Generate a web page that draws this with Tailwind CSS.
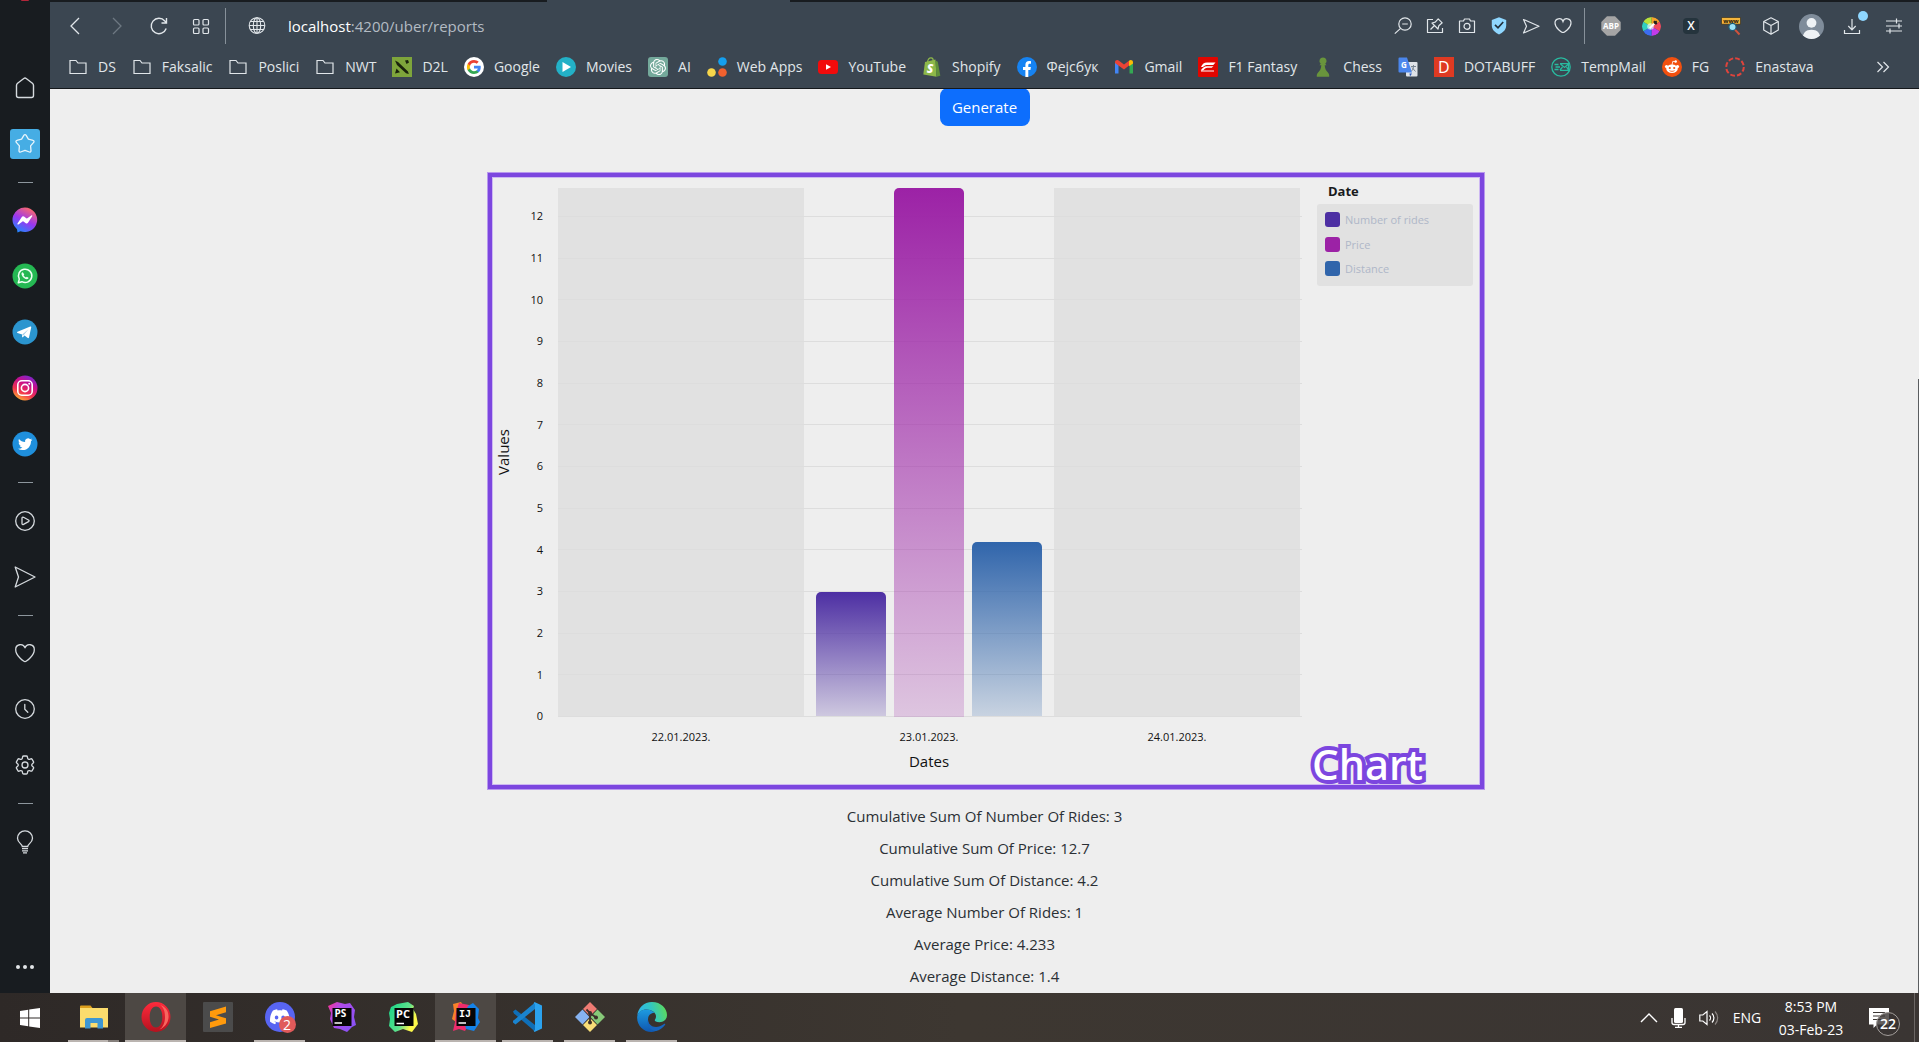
<!DOCTYPE html>
<html lang="en">
<head>
<meta charset="utf-8">
<meta name="viewport" content="width=device-width, initial-scale=1">
<title>Reports</title>
<script src="https://cdn.jsdelivr.net/npm/@tailwindcss/browser@4"></script>
</head>
<body class="min-h-screen flex flex-col bg-[#eeeeee] font-['Open_Sans','Noto_Sans',sans-serif] text-[15px] text-[#212529]">

<div class="flex-1 flex">

  <!-- Browser sidebar -->
  <aside class="w-[50px] shrink-0 bg-[#181c20] text-[#d5dade] flex flex-col items-stretch">
    <div class="h-[60px] overflow-hidden flex justify-center items-start">
      <span class="w-2 h-px rounded-b-full bg-[#b3263a]"></span>
    </div>
    <button class="h-14 grid place-items-center" aria-label="Home"><svg class="size-6" viewBox="0 0 24 24" fill="none" stroke="currentColor" stroke-width="1.400" stroke-linejoin="round"><path d="M3.500 9.500c0-1 .4-1.700 1.100-2.300L10.800 2.500a2 2 0 0 1 2.400 0l6.200 4.700c.7.6 1.100 1.300 1.100 2.300V19.500a2 2 0 0 1-2 2h-13a2 2 0 0 1-2-2Z"/></svg></button>
    <button class="h-14 grid place-items-center" aria-label="Speed Dial"><span class="size-[30px] rounded-[3px] bg-[#46ade4] grid place-items-center"><svg class="size-6" viewBox="0 0 24 24" fill="none" stroke="#e8f5fc" stroke-width="1.300" stroke-linejoin="round"><path d="M11 3.200a1.200 1.200 0 0 1 2 0l2.400 4 4.700 1.200a1.200 1.200 0 0 1 .6 2l-3.100 3.500.4 5a1.200 1.200 0 0 1-1.600 1.100L12 18.300l-4.400 1.700A1.200 1.200 0 0 1 6 18.900l.4-5-3.100-3.500a1.200 1.200 0 0 1 .6-2l4.700-1.200Z"/></svg></span></button>
    <div class="h-5 grid place-items-center"><span class="w-[15px] h-px bg-[#8d969d]"></span></div>
    <button class="h-14 grid place-items-center" aria-label="Messenger"><svg class="size-[26px]" viewBox="0 0 26 26"><defs><linearGradient id="msg" x1="0.200" y1="1" x2="0.700" y2="0"><stop offset="0" stop-color="#1a8cff"/><stop offset=".5" stop-color="#9a36f0"/><stop offset="1" stop-color="#ff6a68"/></linearGradient></defs><path d="M13 .5a12.300 12.300 0 1 1-4.500 23.800L5.500 25.500 5 22.300A12.300 12.300 0 0 1 13 .5Z" fill="url(#msg)"/><path d="M5.500 16.500 9.800 10a1.600 1.600 0 0 1 2.200-.4l2.300 1.700a1 1 0 0 0 1 0l4-2.800c.6-.4 1.300.2.9.8l-4.200 6.500a1.600 1.600 0 0 1-2.200.4l-2.300-1.700a1 1 0 0 0-1 0l-4.100 2.900c-.6.4-1.300-.3-.9-.9Z" fill="#fff"/></svg></button>
    <button class="h-14 grid place-items-center" aria-label="WhatsApp"><svg class="size-[26px]" viewBox="0 0 26 26"><circle cx="13" cy="13" r="12.500" fill="#25b853"/><path d="m6.300 19.700 1-3.600a6.700 6.700 0 1 1 2.600 2.600Z" fill="none" stroke="#eefff3" stroke-width="1.500" stroke-linejoin="round"/><path d="M10.800 9.300c-.6-.1-1.400.7-1.300 1.700.3 2.400 3 5 5.300 5.200 1 0 1.900-.8 1.700-1.500l-1.700-1-.9.8c-1-.4-1.900-1.300-2.300-2.200l.7-.9Z" fill="#eefff3"/></svg></button>
    <button class="h-14 grid place-items-center" aria-label="Telegram"><svg class="size-[26px]" viewBox="0 0 26 26"><circle cx="13" cy="13" r="12.500" fill="#2b95cf"/><path d="m5.500 12.800 12.800-5.200c.6-.2 1.100.1.900 1l-2.200 9.900c-.2.700-.7.900-1.200.6l-3.300-2.500-1.700 1.600c-.4.300-.7.200-.7-.3l.1-2.400-4.700-1.600c-.7-.3-.7-.8 0-1.100Z" fill="#fff"/><path d="m10.200 15.500 6.300-5.300-5.100 6.300Z" fill="#a6cfe6"/></svg></button>
    <button class="h-14 grid place-items-center" aria-label="Instagram"><svg class="size-[26px]" viewBox="0 0 26 26"><defs><linearGradient id="ig" x1=".2" y1="1" x2=".7" y2="0"><stop offset="0" stop-color="#fdc02f"/><stop offset=".35" stop-color="#f1324f"/><stop offset=".7" stop-color="#c40f8e"/><stop offset="1" stop-color="#7a28d0"/></linearGradient></defs><circle cx="13" cy="13" r="12.500" fill="url(#ig)"/><g fill="none" stroke="#fff" stroke-width="1.600"><rect x="5.800" y="5.800" width="14.400" height="14.400" rx="4"/><circle cx="13" cy="13" r="3.600"/></g><circle cx="17.200" cy="8.800" r="1" fill="#fff"/></svg></button>
    <button class="h-14 grid place-items-center" aria-label="Twitter"><svg class="size-[26px]" viewBox="0 0 26 26"><circle cx="13" cy="13" r="12.500" fill="#1f8fdc"/><path transform="translate(6 6) scale(.6)" fill="#fff" d="M23.953 4.570a10 10 0 01-2.825.775 4.958 4.958 0 002.163-2.723c-.951.555-2.005.959-3.127 1.184a4.920 4.920 0 00-8.384 4.482C7.690 8.095 4.067 6.130 1.640 3.162a4.822 4.822 0 00-.666 2.475c0 1.710.870 3.213 2.188 4.096a4.904 4.904 0 01-2.228-.616v.060a4.923 4.923 0 003.946 4.827 4.996 4.996 0 01-2.212.085 4.936 4.936 0 004.604 3.417 9.867 9.867 0 01-6.102 2.105c-.390 0-.779-.023-1.170-.067a13.995 13.995 0 007.557 2.209c9.053 0 13.998-7.496 13.998-13.985 0-.210 0-.420-.015-.630A9.935 9.935 0 0024 4.590z"/></svg></button>
    <div class="h-[21px] grid place-items-center"><span class="w-[15px] h-px bg-[#8d969d]"></span></div>
    <button class="h-14 grid place-items-center" aria-label="Player"><svg class="size-6" viewBox="0 0 24 24" fill="none" stroke="currentColor" stroke-width="1.300" stroke-linejoin="round"><circle cx="12" cy="12" r="9.300"/><path d="M9 9.200c0-1 .7-1.300 1.500-.9l5 2.700c.8.500.8 1.100 0 1.600l-5 2.800c-.8.400-1.500.1-1.500-.8Z"/></svg></button>
    <button class="h-14 grid place-items-center" aria-label="My Flow"><svg class="size-6" viewBox="0 0 24 24" fill="none" stroke="currentColor" stroke-width="1.300" stroke-linejoin="round"><path d="M2.200 2 22 12 2.200 22 5.500 12Z"/></svg></button>
    <div class="h-5 grid place-items-center"><span class="w-[15px] h-px bg-[#8d969d]"></span></div>
    <button class="h-14 grid place-items-center" aria-label="Bookmarks"><svg class="size-6" viewBox="0 0 24 24" fill="none" stroke="currentColor" stroke-width="1.300" stroke-linejoin="round"><path d="M12 20.700c-1 0-9.300-5.700-9.300-12A4.800 4.800 0 0 1 12 6.800a4.800 4.800 0 0 1 9.300 1.900c0 6.300-8.300 12-9.300 12Z"/></svg></button>
    <button class="h-14 grid place-items-center" aria-label="History"><svg class="size-6" viewBox="0 0 24 24" fill="none" stroke="currentColor" stroke-width="1.300" stroke-linecap="round"><circle cx="12" cy="12" r="9.300"/><path d="M11.800 7.500v4.800l3 3"/></svg></button>
    <button class="h-14 grid place-items-center" aria-label="Settings"><svg class="size-6" viewBox="0 0 24 24" fill="none" stroke="currentColor" stroke-width="1.300" stroke-linejoin="round"><path d="M9.594 3.940c.090-.542.560-.940 1.110-.940h2.593c.550 0 1.020.398 1.110.940l.213 1.281c.063.374.313.686.645.870.074.040.147.083.220.127.325.196.720.257 1.075.124l1.217-.456a1.125 1.125 0 0 1 1.370.490l1.296 2.247a1.125 1.125 0 0 1-.260 1.431l-1.003.827c-.293.241-.438.613-.430.992a7.723 7.723 0 0 1 0 .255c-.008.378.137.750.430.991l1.004.827c.424.350.534.955.260 1.430l-1.298 2.247a1.125 1.125 0 0 1-1.369.491l-1.217-.456c-.355-.133-.750-.072-1.076.124a6.470 6.470 0 0 1-.220.128c-.331.183-.581.495-.644.869l-.213 1.281c-.090.543-.560.940-1.110.940h-2.594c-.550 0-1.019-.398-1.110-.940l-.213-1.281c-.062-.374-.312-.686-.644-.870a6.520 6.520 0 0 1-.220-.127c-.325-.196-.720-.257-1.076-.124l-1.217.456a1.125 1.125 0 0 1-1.369-.490l-1.297-2.247a1.125 1.125 0 0 1 .260-1.431l1.004-.827c.292-.240.437-.613.430-.991a6.932 6.932 0 0 1 0-.255c.007-.380-.138-.751-.430-.992l-1.004-.827a1.125 1.125 0 0 1-.260-1.430l1.297-2.247a1.125 1.125 0 0 1 1.370-.491l1.216.456c.356.133.751.072 1.076-.124.072-.044.146-.086.220-.128.332-.183.582-.495.644-.869l.214-1.280Z"/><circle cx="12" cy="12" r="3"/></svg></button>
    <div class="h-[21px] grid place-items-center"><span class="w-[15px] h-px bg-[#8d969d]"></span></div>
    <button class="h-14 grid place-items-center" aria-label="Tips"><svg class="size-6" viewBox="0 0 24 24" fill="none" stroke="currentColor" stroke-width="1.300"><path d="M9.300 16.500c0-2.500-4.800-3.700-4.800-8.200a7.500 7.500 0 0 1 15 0c0 4.500-4.800 5.700-4.800 8.200ZM9 18.700h6M9 20.800h6M10 22.900h4"/></svg></button>
    <button class="mt-auto h-[52px] flex justify-center items-center gap-[3px]" aria-label="More"><span class="size-1 rounded-full bg-[#e2e5e8]"></span><span class="size-1 rounded-full bg-[#e2e5e8]"></span><span class="size-1 rounded-full bg-[#e2e5e8]"></span></button>
  </aside>

  <div class="flex-1 min-w-0 flex flex-col">

    <!-- Tab strip edge with the active tab -->
    <div class="h-0.5 bg-[#181c20] flex"><span class="ml-[497px] w-[243px] bg-[#3b4651]"></span></div>

    <header class="bg-[#3b4651] border-b border-[#14181b] text-[#e1e6ea]">
      <!-- Address bar -->
      <div class="h-12 flex items-center pl-1 pr-[5px]">
        <button class="w-[42px] grid place-items-center" aria-label="Back"><svg class="size-5" viewBox="0 0 20 20" fill="none" stroke="currentColor" stroke-width="1.300"><path d="M14 2 6 10l8 8"/></svg></button>
        <button class="w-[42px] grid place-items-center text-[#6d7882]" aria-label="Forward"><svg class="size-5" viewBox="0 0 20 20" fill="none" stroke="currentColor" stroke-width="1.300"><path d="m6 2 8 8-8 8"/></svg></button>
        <button class="w-[42px] grid place-items-center" aria-label="Reload"><svg class="size-5" viewBox="0 0 20 20" fill="none" stroke="currentColor" stroke-width="1.400"><path d="M17.200 12.500A7.700 7.700 0 1 1 15.800 5l1.500 1.500M17.500 2v5h-5"/></svg></button>
        <button class="w-[42px] grid place-items-center" aria-label="Tab overview"><svg class="size-5" viewBox="0 0 20 20" fill="none" stroke="currentColor" stroke-width="1.200"><rect x="2.500" y="3.500" width="5.500" height="5.500" rx="1"/><rect x="12" y="3.500" width="5.500" height="5.500" rx="1"/><rect x="2.500" y="12" width="5.500" height="5.500" rx="1"/><rect x="12" y="12" width="5.500" height="5.500" rx="1"/></svg></button>
        <span class="ml-[3px] w-px h-9 bg-[#87919a]"></span>
        <button class="ml-2 w-[46px] grid place-items-center" aria-label="Site information"><svg class="size-5" viewBox="0 0 20 20" fill="none" stroke="currentColor" stroke-width="1.100"><circle cx="10" cy="9.500" r="7.800"/><ellipse cx="10" cy="9.500" rx="3.700" ry="7.800"/><path d="M10 1.700v15.600M2.200 9.500h15.600M3.300 5.500h13.400M3.300 13.500h13.400"/></svg></button>
        <label class="ml-2 flex-1 min-w-0 flex items-center"><span class="text-white">localhost</span><input class="flex-1 min-w-0 bg-transparent text-[#b3bbc3] outline-none" type="text" aria-label="Address" value=":4200/uber/reports"></label>

        <button class="w-8 grid place-items-center" aria-label="Zoom"><svg class="size-5" viewBox="0 0 20 20" fill="none" stroke="currentColor" stroke-width="1.200"><circle cx="12" cy="8" r="6.200"/><path d="m7.600 12.400-5.800 5.200M9.200 8h5.600"/></svg></button>
        <button class="w-8 grid place-items-center" aria-label="Pin board"><svg class="size-5" viewBox="0 0 20 20" fill="none" stroke="currentColor" stroke-width="1.200" stroke-linejoin="round"><path d="M8 3.500H2.500v13h15V12M5.500 13.500l4-4M7 7l6 6 .8-3.200 3.400-3L13.200 2.800l-3 3.400Z"/></svg></button>
        <button class="w-8 grid place-items-center" aria-label="Snapshot"><svg class="size-5" viewBox="0 0 20 20" fill="none" stroke="currentColor" stroke-width="1.200" stroke-linejoin="round"><path d="M2.500 5h4l1-2h5l1 2h4v11.500h-15Z"/><circle cx="10" cy="10.300" r="3"/></svg></button>
        <button class="w-8 grid place-items-center" aria-label="Ad blocker"><svg class="size-5" viewBox="0 0 20 20"><path d="M10 1.200 17.200 4v5.500c0 4.500-3.700 7.300-7.200 9-3.500-1.700-7.200-4.500-7.200-9V4Z" fill="#8fd7ff"/><path d="m6 8.800 3 3L14.200 6" fill="none" stroke="#22313d" stroke-width="1.700"/></svg></button>
        <button class="w-8 grid place-items-center" aria-label="Send to My Flow"><svg class="size-5" viewBox="0 0 20 20" fill="none" stroke="currentColor" stroke-width="1.200" stroke-linejoin="round"><path d="M2.500 3.500 18 10.300 2.500 17 5.500 10.300Z"/></svg></button>
        <button class="w-8 grid place-items-center" aria-label="Add to bookmarks"><svg class="size-5" viewBox="0 0 20 20" fill="none" stroke="currentColor" stroke-width="1.200"><path d="M10 16.500c-1 0-8-4.300-8-9.500a4.100 4.100 0 0 1 8-1.400A4.100 4.100 0 0 1 18 7c0 5.200-7 9.500-8 9.500Z"/></svg></button>
        <span class="ml-[5px] mr-1.5 w-px h-9 bg-[#87919a]"></span>
        <button class="w-10 grid place-items-center" aria-label="Adblock Plus"><svg class="size-5" viewBox="0 0 20 20"><path d="M6 .3h8L19.700 6v8L14 19.700H6L.3 14V6Z" fill="#a5a5a5"/><text x="10" y="13.300" text-anchor="middle" font-size="8" font-weight="700" fill="#fff">ABP</text></svg></button>
        <button class="w-10 grid place-items-center" aria-label="Color picker"><span class="size-[19px] rounded-full overflow-hidden grid"><svg class="size-[19px]" viewBox="0 0 20 20"><path d="M10 10 10 0A10 10 0 0 1 18.700 5Z" fill="#f6a32a"/><path d="M10 10 18.700 5A10 10 0 0 1 18.700 15Z" fill="#f04a5e"/><path d="M10 10 18.700 15A10 10 0 0 1 10 20Z" fill="#c33bea"/><path d="M10 10V20A10 10 0 0 1 1.300 15Z" fill="#3c6df0"/><path d="M10 10 1.300 15A10 10 0 0 1 1.300 5Z" fill="#30cfc0"/><path d="M10 10 1.300 5A10 10 0 0 1 10 0Z" fill="#b8e23b"/><circle cx="9" cy="10" r="3.500" fill="#fff" opacity=".6"/><path d="m8 12 5-5" stroke="#fff" stroke-width="2"/><path d="m12.500 4.500 3 3M13 7l2.500-2.500" stroke="#222" stroke-width="2"/></svg></span></button>
        <button class="w-10 grid place-items-center" aria-label="X extension"><span class="size-4 rounded-sm bg-[#25343d] grid place-items-center text-xs leading-none font-semibold text-white">X</span></button>
        <button class="w-10 grid place-items-center" aria-label="WWW extension"><svg class="size-5 overflow-visible" viewBox="0 0 20 20"><path d="M.5 1.500h19v6.700H.5Z" fill="#f4b53c" stroke="#2b2618" stroke-width=".6"/><text x="10" y="6.500" text-anchor="middle" font-size="6" font-weight="700" fill="#1c1609">www</text><circle cx="11.500" cy="11" r="3.600" fill="#9be2f4" stroke="#1e5c77" stroke-width="1.200"/><path d="m14.200 13.900 4.300 4.600" stroke="#d0533c" stroke-width="2"/></svg></button>
        <button class="w-10 grid place-items-center" aria-label="Extensions"><svg class="size-5" viewBox="0 0 20 20" fill="none" stroke="currentColor" stroke-width="1.200" stroke-linejoin="round"><path d="M10 1.800 17.300 5.500v8.600L10 18.200 2.700 14.100V5.500ZM2.700 5.500 10 9.500l7.300-4M10 9.500v8.700"/></svg></button>
        <button class="w-10 grid place-items-center" aria-label="Profile"><svg class="size-[25px]" viewBox="0 0 24 24"><defs><clipPath id="av"><circle cx="12" cy="12" r="12"/></clipPath></defs><g clip-path="url(#av)"><path d="M0 0h24v24H0Z" fill="#7f8c9a"/><circle cx="12" cy="8.500" r="4.700" fill="#eef2f5"/><path d="M3.500 24c0-6 3-9 8.500-9s8.500 3 8.500 9Z" fill="#eef2f5"/></g></svg></button>
        <button class="relative w-10 grid place-items-center" aria-label="Downloads"><svg class="size-5" viewBox="0 0 20 20" fill="none" stroke="currentColor" stroke-width="1.200"><path d="M11 3v10.500M7.300 10l3.700 3.800 3.700-3.800M3.500 14v3.500h15V14"/></svg><span class="absolute right-[3px] -top-[5px] size-2.5 rounded-full bg-[#8fd7ff]"></span></button>
        <button class="ml-[3px] w-10 grid place-items-center" aria-label="Easy setup"><svg class="size-5" viewBox="0 0 20 20" fill="none" stroke="currentColor" stroke-width="1.200"><path d="M2 5h16M2 10h16M2 15h16M12.500 2.500v5M15 7.500v5M6 12.500v5"/></svg></button>
      </div>

      <!-- Bookmarks bar -->
      <nav class="h-[38px] pb-1 pl-[18px] pr-[26px] flex items-center gap-4 text-sm whitespace-nowrap" aria-label="Bookmarks">
        <a href="#" class="flex items-center gap-2.5"><svg class="size-5" viewBox="0 0 20 20" fill="none" stroke="currentColor" stroke-width="1.200"><path d="M2 16.500v-13h6l2 2.500h8v10.500Z"/></svg>DS</a>
        <a href="#" class="flex items-center gap-2.5"><svg class="size-5" viewBox="0 0 20 20" fill="none" stroke="currentColor" stroke-width="1.200"><path d="M2 16.500v-13h6l2 2.500h8v10.500Z"/></svg>Faksalic</a>
        <a href="#" class="flex items-center gap-2.5"><svg class="size-5" viewBox="0 0 20 20" fill="none" stroke="currentColor" stroke-width="1.200"><path d="M2 16.500v-13h6l2 2.500h8v10.500Z"/></svg>Poslici</a>
        <a href="#" class="flex items-center gap-2.5"><svg class="size-5" viewBox="0 0 20 20" fill="none" stroke="currentColor" stroke-width="1.200"><path d="M2 16.500v-13h6l2 2.500h8v10.500Z"/></svg>NWT</a>
        <a href="#" class="flex items-center gap-2.5"><svg class="size-5" viewBox="0 0 20 20"><path d="M0 0h20v20H0Z" fill="#7ea53b"/><path d="M3 3.500 6 5l10 9.500.8 2.500-2.800-.7L5 8ZM13 3.500l3-.5 1 2.500-2.500 1.500ZM3 16.500l1.500-5 3.500 3.800Z" fill="#1a230c"/></svg>D2L</a>
        <a href="#" class="flex items-center gap-2.5"><svg class="size-5" viewBox="0 0 20 20"><circle cx="10" cy="10" r="10" fill="#fff"/><g transform="translate(2.300 2.300) scale(.64)"><path fill="#4285f4" d="M22.560 12.250c0-.780-.070-1.530-.200-2.250H12v4.260h5.920c-.260 1.370-1.040 2.530-2.210 3.310v2.770h3.570c2.080-1.920 3.280-4.740 3.280-8.090Z"/><path fill="#34a853" d="M12 23c2.970 0 5.460-.980 7.280-2.660l-3.570-2.770c-.980.660-2.230 1.060-3.710 1.060-2.860 0-5.290-1.930-6.160-4.530H2.180v2.840C3.990 20.530 7.700 23 12 23Z"/><path fill="#fbbc05" d="M5.840 14.090c-.220-.660-.350-1.360-.350-2.090s.130-1.430.350-2.090V7.070H2.180C1.430 8.550 1 10.220 1 12s.430 3.450 1.180 4.930l3.660-2.840Z"/><path fill="#ea4335" d="M12 5.380c1.620 0 3.060.560 4.210 1.640l3.150-3.150C17.450 2.090 14.970 1 12 1 7.700 1 3.990 3.470 2.180 7.070l3.660 2.840c.870-2.600 3.300-4.530 6.160-4.530Z"/></g></svg>Google</a>
        <a href="#" class="flex items-center gap-2.5"><svg class="size-5" viewBox="0 0 20 20"><circle cx="10" cy="10" r="10" fill="#23b1c7"/><path d="m6.500 5 8.500 5-8.500 5Z" fill="#fff"/></svg>Movies</a>
        <a href="#" class="flex items-center gap-2.5"><svg class="size-5" viewBox="0 0 20 20"><rect width="20" height="20" rx="3" fill="#74a99b"/><path transform="translate(2 2) scale(.667)" fill="#fff" d="M22.282 9.821a5.985 5.985 0 0 0-.516-4.911 6.046 6.046 0 0 0-6.510-2.900A6.065 6.065 0 0 0 4.981 4.182a5.985 5.985 0 0 0-3.998 2.900 6.046 6.046 0 0 0 .743 7.097 5.980 5.980 0 0 0 .511 4.911 6.051 6.051 0 0 0 6.515 2.900A5.985 5.985 0 0 0 13.260 24a6.056 6.056 0 0 0 5.772-4.206 5.989 5.989 0 0 0 3.998-2.900 6.056 6.056 0 0 0-.748-7.073zm-9.022 12.608a4.476 4.476 0 0 1-2.876-1.041l.142-.080 4.778-2.758a.795.795 0 0 0 .393-.681v-6.737l2.020 1.169a.071.071 0 0 1 .038.052v5.583a4.504 4.504 0 0 1-4.495 4.494zm-9.661-4.125a4.471 4.471 0 0 1-.535-3.014l.142.085 4.783 2.758a.771.771 0 0 0 .781 0l5.843-3.369v2.332a.080.080 0 0 1-.033.062L9.740 19.950a4.499 4.499 0 0 1-6.141-1.646zM2.341 7.896a4.485 4.485 0 0 1 2.366-1.973V11.600a.766.766 0 0 0 .388.677l5.814 3.354-2.020 1.169a.076.076 0 0 1-.071 0l-4.830-2.787A4.504 4.504 0 0 1 2.341 7.872zm16.596 3.856L13.104 8.364 15.119 7.200a.076.076 0 0 1 .071 0l4.830 2.791a4.494 4.494 0 0 1-.677 8.104v-5.677a.790.790 0 0 0-.407-.667zm2.011-3.023l-.142-.085-4.774-2.782a.776.776 0 0 0-.785 0L9.409 9.230V6.897a.066.066 0 0 1 .028-.062l4.830-2.787a4.499 4.499 0 0 1 6.680 4.660zM8.307 12.863l-2.020-1.164a.080.080 0 0 1-.038-.057V6.074a4.499 4.499 0 0 1 7.376-3.454l-.142.081L8.704 5.459a.795.795 0 0 0-.393.681zm1.098-2.365l2.602-1.500 2.607 1.500v2.999l-2.597 1.500-2.607-1.500Z"/></svg>AI</a>
        <a href="#" class="flex items-center gap-2.5"><svg class="size-5" viewBox="0 0 20 20"><circle cx="15.500" cy="4.500" r="4.300" fill="#149fee"/><circle cx="4.500" cy="15.500" r="4.300" fill="#f7d64a"/><circle cx="15.500" cy="15.500" r="4.300" fill="#f1612e"/></svg>Web Apps</a>
        <a href="#" class="flex items-center gap-2.5"><svg class="size-5" viewBox="0 0 20 20"><rect y="3" width="20" height="14" rx="3.500" fill="#f20b0b"/><path d="m8 7.200 5 2.800-5 2.800Z" fill="#fff"/></svg>YouTube</a>
        <a href="#" class="flex items-center gap-2.5"><svg class="size-5" viewBox="0 0 20 20"><path d="M3 5 13.500 2.500 14.500 19.800 1.300 17.500Z" fill="#8db849"/><path d="m13.500 3.500 2.300 1.200 2.500 14-3.800 1.100Z" fill="#5f8f3a"/><path d="M5.500 5C6 1.500 8 .7 9.300.8c1.700.2 2 2 2 3.200" fill="none" stroke="#8db849" stroke-width="1.200"/><text x="8" y="15.500" text-anchor="middle" font-size="12" font-weight="800" font-style="italic" fill="#fff">S</text></svg>Shopify</a>
        <a href="#" class="flex items-center gap-2.5"><svg class="size-5" viewBox="0 0 20 20"><circle cx="10" cy="10" r="10" fill="#1683f2"/><path d="M8.400 20v-7H6v-3h2.400V7.800c0-2.500 1.400-3.800 3.700-3.800 1 0 1.900.2 1.900.2v2.500h-1.200c-1.200 0-1.500.7-1.500 1.500V10h2.600l-.5 3h-2.100v7Z" fill="#fff"/></svg>Фејсбук</a>
        <a href="#" class="flex items-center gap-2.5"><svg class="size-5" viewBox="0 0 20 20"><path d="M1 5v11.500h3.500V8Z" fill="#4285f4"/><path d="M19 5v11.500h-3.500V8Z" fill="#34a853"/><path d="M1 5.500C1 3 3.500 2.500 5 3.700L10 7.500l5-3.800v4.800L10 12.500 1 6Z" fill="#ea4335"/><path d="M15 3.700c1.700-1.200 4-.5 4 1.800v1L15.500 9 15 8.500Z" fill="#fbbc05"/></svg>Gmail</a>
        <a href="#" class="flex items-center gap-2.5"><svg class="size-5" viewBox="0 0 20 20"><rect width="20" height="20" rx="1" fill="#e10600"/><path d="M3 10C4.500 6.800 6 5.500 9 5.500h8.500L15.300 8H9.500C7.500 8 6.500 8.500 5 10Z" fill="#fff"/><path d="M9 9.200h6.500l-1.800 1.600H9.500c-2 0-3 1.200-4.500 2.700H2.700C4.500 11 6 9.200 9 9.200Z" fill="#fff"/><path d="M3 14h13" stroke="#fff" stroke-width="1"/></svg>F1 Fantasy</a>
        <a href="#" class="flex items-center gap-2.5"><svg class="size-5" viewBox="0 0 20 20"><path d="M10 .5a3.500 3.500 0 0 1 2.300 6.200l1.200 1.500h-1.800c.2 3 1 5 3 7 1.200 1.200 1.700 2.500 1.500 4.500H3.800c-.2-2 .3-3.300 1.500-4.500 2-2 2.800-4 3-7H6.500l1.200-1.500A3.500 3.500 0 0 1 10 .5Z" fill="#69953c"/></svg>Chess</a>
        <a href="#" class="flex items-center" aria-label="Translate"><svg class="size-5" viewBox="0 0 20 20"><rect x="8" y="5" width="11.500" height="14.500" rx="1" fill="#dfe3e8"/><path d="M1.500.5H9l5 15H1.500a1 1 0 0 1-1-1v-13a1 1 0 0 1 1-1Z" fill="#4b86ec"/><path d="M11.500 16.500h2.500l-2 3Z" fill="#2c5bb8"/><text x="5.800" y="11" text-anchor="middle" font-size="8" font-weight="700" fill="#fff">G</text><path d="M13 9.500h5M15.500 8v1.500c0 2-1 3.500-2 4.500M14 10.500l3.500 4" stroke="#7a8794" stroke-width="1" fill="none"/></svg></a>
        <a href="#" class="flex items-center gap-2.5"><span class="size-5 bg-[#df3a22] text-white grid place-items-center text-base leading-none">D</span>DOTABUFF</a>
        <a href="#" class="flex items-center gap-2.5"><svg class="size-5" viewBox="0 0 20 20" fill="none" stroke="#29bba0" stroke-width="1.300"><circle cx="10" cy="10" r="9.200"/><path d="M9 6.700h8.500v6.600H9M9.500 7l4 3.500 4-3.500M3.500 7.500h4M4.500 10H9M3.500 12.500h4M11.500 10l-2.500 3M15.500 10l2 3"/></svg>TempMail</a>
        <a href="#" class="flex items-center gap-2.5"><svg class="size-5" viewBox="0 0 20 20"><circle cx="10" cy="10" r="10" fill="#f2500f"/><g fill="#fff"><ellipse cx="10" cy="11.800" rx="5.800" ry="4.200"/><circle cx="4.500" cy="9.500" r="1.600"/><circle cx="15.500" cy="9.500" r="1.600"/><circle cx="13.700" cy="4.500" r="1.200"/></g><path d="m10 8 .8-3.700 2.700.5" stroke="#fff" stroke-width=".8" fill="none"/><circle cx="7.800" cy="11" r="1.100" fill="#f2500f"/><circle cx="12.200" cy="11" r="1.100" fill="#f2500f"/><path d="M7.500 13.600c1.300 1 3.700 1 5 0" stroke="#f2500f" stroke-width=".8" fill="none"/></svg>FG</a>
        <a href="#" class="flex items-center gap-2.5"><svg class="size-5" viewBox="0 0 20 20" fill="none" stroke="#e0443c" stroke-width="2"><circle cx="10" cy="10" r="8.800" stroke-dasharray="4.800 2.100"/></svg>Enastava</a>
        <button class="ml-auto" aria-label="More bookmarks"><svg class="size-5" viewBox="0 0 20 20" fill="none" stroke="currentColor" stroke-width="1.200"><path d="m4.500 5 5 5-5 5M10.500 5l5 5-5 5"/></svg></button>
      </nav>
    </header>

    <!-- Reports page -->
    <main class="relative flex-1 overflow-hidden flex flex-col items-center">
      <button class="-mt-px h-[38px] w-[90px] rounded-lg bg-[#0d6efd] text-white">Generate</button>

      <div class="w-full pl-[3px] mt-[46px] flex justify-center">
        <figure class="relative w-[998px] max-w-full p-px bg-[#b898ee]">
          <div class="border-4 border-[#7c46df]"><div class="border border-[#cdb8f2] bg-[#eeeeee]">
          <svg class="block w-full h-auto" viewBox="0 0 986 606" role="img" aria-label="Rides, price and distance by date">
            <defs>
              <linearGradient id="b1" x1="0" y1="0" x2="0" y2="1"><stop offset="0" stop-color="#4d2fa3"/><stop offset="1" stop-color="#4d2fa3" stop-opacity=".2"/></linearGradient>
              <linearGradient id="b2" x1="0" y1="0" x2="0" y2="1"><stop offset="0" stop-color="#9c22a6"/><stop offset="1" stop-color="#9c22a6" stop-opacity=".2"/></linearGradient>
              <linearGradient id="b3" x1="0" y1="0" x2="0" y2="1"><stop offset="0" stop-color="#3065ab"/><stop offset="1" stop-color="#3065ab" stop-opacity=".2"/></linearGradient>
            </defs>
            <g fill="#e1e1e1"><path d="M65 10h246v529H65ZM561 10h246v529H561Z"/></g>
            <g stroke="#dddddd" stroke-width="1">
              <path d="M65 538.500h744M65 496.500h744M65 455.500h744M65 413.500h744M65 371.500h744M65 330.500h744M65 288.500h744M65 246.500h744M65 205.500h744M65 163.500h744M65 121.500h744M65 80.500h744M65 38.500h744"/>
            </g>
            <path d="M323 538V419a5 5 0 0 1 5-5h60a5 5 0 0 1 5 5V538Z" fill="url(#b1)"/>
            <path d="M401 539V15a5 5 0 0 1 5-5h60a5 5 0 0 1 5 5V539Z" fill="url(#b2)"/>
            <path d="M479 538V369a5 5 0 0 1 5-5h60a5 5 0 0 1 5 5V538Z" fill="url(#b3)"/>
            <g font-size="11" fill="#111111" text-anchor="end">
              <text x="50" y="542">0</text><text x="50" y="501">1</text><text x="50" y="459">2</text><text x="50" y="417">3</text><text x="50" y="376">4</text><text x="50" y="334">5</text><text x="50" y="292">6</text><text x="50" y="251">7</text><text x="50" y="209">8</text><text x="50" y="167">9</text><text x="50" y="126">10</text><text x="50" y="84">11</text><text x="50" y="42">12</text>
            </g>
            <g font-size="11" fill="#111111" text-anchor="middle">
              <text x="188" y="563">22.01.2023.</text><text x="436" y="563">23.01.2023.</text><text x="684" y="563">24.01.2023.</text>
            </g>
            <g font-size="15" fill="#111111" text-anchor="middle">
              <text x="436" y="589">Dates</text>
              <text transform="translate(16 274) rotate(-90)">Values</text>
            </g>
            <text x="835" y="18" font-size="13" font-weight="700" fill="#181a1c">Date</text>
            <rect x="824" y="26" width="156" height="82" rx="3" fill="#e1e1e1"/>
            <rect x="832" y="34" width="15" height="15" rx="3" fill="#4d2fa3"/>
            <rect x="832" y="59" width="15" height="15" rx="3" fill="#9c22a6"/>
            <rect x="832" y="83" width="15" height="15" rx="3" fill="#3065ab"/>
            <g font-size="11" fill="#afb7c8"><text x="852" y="46">Number of rides</text><text x="852" y="71">Price</text><text x="852" y="95">Distance</text></g>
          </svg>
          </div></div>
          <figcaption class="absolute right-[59px] bottom-px leading-none"><svg class="block w-[116px] h-11 overflow-visible" viewBox="0 0 116 44"><text x="2" y="35" font-size="42" fill="#fff" stroke="#7c46df" stroke-width="8" stroke-linejoin="miter" paint-order="stroke" font-family="Noto Sans, sans-serif" font-weight="500">Chart</text></svg></figcaption>
        </figure>
      </div>

      <ul class="mt-2.5 text-center leading-8 text-[#2b3035]">
        <li>Cumulative Sum Of Number Of Rides: 3</li>
        <li>Cumulative Sum Of Price: 12.7</li>
        <li>Cumulative Sum Of Distance: 4.2</li>
        <li>Average Number Of Rides: 1</li>
        <li>Average Price: 4.233</li>
        <li>Average Distance: 1.4</li>
      </ul>
      <!-- Scroll thumb -->
      <span class="absolute right-0 top-[290px] bottom-0 w-px bg-[#5a5d60]"></span>
    </main>
  </div>
</div>

<!-- Windows taskbar -->
<footer class="h-[49px] shrink-0 bg-linear-to-r from-[#2e2927] via-[#3d3731] to-[#3a3533] flex text-white">
  <nav class="flex gap-px" aria-label="Taskbar">
    <button class="w-[62px] grid place-items-center pr-[3px]" aria-label="Start"><svg class="size-5" viewBox="0 0 20 20" fill="#fff"><path d="M0 2.900 8.200 1.800V9.600H0ZM9.200 1.600 20 0V9.600H9.200ZM0 10.500H8.200V18.300L0 17.100ZM9.200 10.500H20V20L9.200 18.400Z"/></svg></button>
    <button class="w-[61px] grid grid-rows-[1fr_2px] place-items-center" aria-label="File Explorer"><svg class="size-[30px]" viewBox="0 0 30 30"><path d="M1 4.500a1 1 0 0 1 1-1h9.500l2 2.500H1Z" fill="#dd9f1c"/><path d="M1 6h28v19.500H1Z" fill="#fbdc6d"/><path d="M6 26.500V18a2 2 0 0 1 2-2h14a2 2 0 0 1 2 2v8.500h-5.500V21h-7v5.500Z" fill="#3e97d3"/></svg><span class="flex h-0.5 w-[51px] bg-[#857f7b]"><span class="w-10 bg-[#bab4b0]"></span></span></button>
    <button class="w-[61px] grid grid-rows-[1fr_2px] place-items-center bg-[#4d4844]" aria-label="Opera"><svg class="size-[30px]" viewBox="0 0 30 30"><defs><linearGradient id="op" x1="0" y1="0" x2="0" y2="1"><stop offset="0" stop-color="#ff2b3c"/><stop offset="1" stop-color="#b5121f"/></linearGradient></defs><path fill-rule="evenodd" d="M15 0a14.500 15 0 1 0 0 30a14.500 15 0 1 0 0-30ZM15 4.500c4 0 6.300 4.500 6.300 10.500s-2.300 10.500-6.300 10.500S8.700 21 8.700 15 11 4.500 15 4.500Z" fill="url(#op)"/><path d="M19 3C26 5 28 11 27.500 16c-.5 5-4 9.500-9 11.500 3.500-2 5.500-7 5.500-12.500S22.500 5 19 3Z" fill="#f7665f"/></svg><span class="w-full h-0.5 bg-[#bab4b0]"></span></button>
    <button class="w-[61px] grid grid-rows-[1fr_2px] place-items-center" aria-label="Sublime Text"><svg class="size-[30px]" viewBox="0 0 30 30"><rect width="30" height="30" rx="1" fill="#4b4b4b"/><path d="M23 4.500v5.800l-10 3 10 3V21.500L7 26v-5.700l9-2.800-9-2.800V9.300Z" fill="#ff9a0c"/></svg><span class="h-0.5"></span></button>
    <button class="w-[61px] grid grid-rows-[1fr_2px] place-items-center" aria-label="Discord, 2 notifications"><span class="relative"><svg class="size-[30px]" viewBox="0 0 30 30"><circle cx="15" cy="15" r="15" fill="#5865f2"/><path transform="translate(5 5) scale(.82)" fill="#fff" d="M20.317 4.370a19.791 19.791 0 00-4.885-1.515.074.074 0 00-.079.037c-.211.375-.445.865-.608 1.250-1.845-.276-3.680-.276-5.487 0-.164-.393-.406-.874-.618-1.250a.077.077 0 00-.079-.037 19.736 19.736 0 00-4.885 1.515.070.070 0 00-.032.028C.533 9.046-.319 13.580.099 18.058a.082.082 0 00.031.056c2.053 1.508 4.041 2.423 5.993 3.029a.078.078 0 00.084-.028c.462-.630.873-1.295 1.226-1.994a.076.076 0 00-.042-.106c-.653-.248-1.274-.550-1.872-.892a.077.077 0 01-.008-.128c.126-.094.252-.192.372-.291a.074.074 0 01.078-.011c3.928 1.793 8.180 1.793 12.061 0a.074.074 0 01.079.010c.120.099.246.198.373.292a.077.077 0 01-.007.128 12.299 12.299 0 01-1.873.891.077.077 0 00-.041.107c.360.698.772 1.363 1.225 1.993a.076.076 0 00.084.029c1.961-.607 3.950-1.522 6.002-3.029a.077.077 0 00.031-.055c.500-5.177-.838-9.674-3.549-13.660a.061.061 0 00-.031-.029zM8.020 15.331c-1.183 0-2.157-1.086-2.157-2.419 0-1.333.956-2.419 2.157-2.419 1.211 0 2.176 1.095 2.157 2.419 0 1.333-.956 2.419-2.157 2.419zm7.975 0c-1.183 0-2.157-1.086-2.157-2.419 0-1.333.955-2.419 2.157-2.419 1.211 0 2.176 1.095 2.157 2.419 0 1.333-.946 2.419-2.157 2.419Z"/></svg><span class="absolute -right-px -bottom-px size-[17px] rounded-full bg-[#e05a5a] text-sm leading-[17px] text-center">2</span></span><span class="w-[51px] h-0.5 bg-[#bab4b0]"></span></button>
    <button class="w-[61px] grid grid-rows-[1fr_2px] place-items-center" aria-label="PhpStorm"><svg class="size-[30px]" viewBox="0 0 30 30"><defs><linearGradient id="ps" x1="0" y1="0" x2="1" y2=".7"><stop offset="0" stop-color="#ff318c"/><stop offset=".35" stop-color="#b04bea"/><stop offset="1" stop-color="#8a52f6"/></linearGradient></defs><path d="M1 4 10 0l8 2 5-1 5 7-1 7 2 8-4 2-5 5-7-3-6-1-4-9 1-6Z" fill="url(#ps)"/><rect x="5.500" y="6" width="19" height="18" fill="#060606"/><text x="7.500" y="15" font-size="10" font-weight="700" fill="#fff">PS</text><path d="M7.500 21h7.500" stroke="#fff" stroke-width="1.500"/></svg><span class="h-0.5"></span></button>
    <button class="w-[61px] grid grid-rows-[1fr_2px] place-items-center" aria-label="PyCharm"><svg class="size-[30px]" viewBox="0 0 30 30"><defs><linearGradient id="pc" x1="0" y1=".3" x2="1" y2=".8"><stop offset="0" stop-color="#21d789"/><stop offset=".5" stop-color="#5fe08c"/><stop offset=".8" stop-color="#fcf84a"/></linearGradient></defs><path d="m2 5 6-3 11-2 6 4-1 3 3 5 2 10-6 8-9-3-8 3-6-6 1-7-1-6Z" fill="url(#pc)"/><rect x="5.500" y="6" width="19" height="18" fill="#060606"/><text x="7" y="16" font-size="11" font-weight="700" fill="#fff">PC</text><path d="M7.500 21.500h7.500" stroke="#fff" stroke-width="1.500"/></svg><span class="h-0.5"></span></button>
    <button class="w-[61px] grid grid-rows-[1fr_2px] place-items-center bg-[#4d4844]" aria-label="IntelliJ IDEA"><svg class="size-[30px]" viewBox="0 0 30 30"><path d="m2 2 8-2 5 8-6 14-4-2-4-3 2-8Z" fill="#f9812a"/><path d="m8 1 10 2 5 10-9 16-6-2-6 2 2-9 1-10Z" fill="#ee2c6c"/><path d="m17 4 5-3 6 6-1 9 2 4-6 9-8-2-3-12Z" fill="#1583e8"/><rect x="5.500" y="6" width="19" height="18" fill="#060606"/><text x="8" y="15" font-size="10" font-weight="700" fill="#fff" font-family="Liberation Mono, monospace">IJ</text><path d="M7.500 21h7.500" stroke="#fff" stroke-width="1.500"/></svg><span class="w-full h-0.5 bg-[#bab4b0]"></span></button>
    <button class="w-[61px] grid grid-rows-[1fr_2px] place-items-center" aria-label="Visual Studio Code"><svg class="size-[30px]" viewBox="0 0 30 30"><path d="m0 9.500 2.500-2L22 23v6.500L1 11.500Z" fill="#0f6fb8"/><path d="M0 20.500 2.500 22.500 22 7V.5L.5 18.500a1 1 0 0 0-.5 2Z" fill="#1a84cf"/><path d="M21.500 0 29 3.500v23L21.500 30l-1-1.500c1 .3 1.500-.3 1.500-1.500V3c0-1-.6-1.500-1.500-1.500Z" fill="#2ba2ee"/></svg><span class="w-[51px] h-0.5 bg-[#bab4b0]"></span></button>
    <button class="w-[61px] grid grid-rows-[1fr_2px] place-items-center" aria-label="Git Bash"><svg class="size-[30px]" viewBox="0 0 30 30"><path d="m15 0 7 7-7 7-7-7Z" fill="#ee7b73"/><path d="m7.500 7.500 7 7.500-7 7.500L0 15Z" fill="#86b2f0"/><path d="m22.500 7.500 7.500 7.500-7.500 7.500-7-7.500Z" fill="#87c979"/><path d="m15 16 7 7-7 7-7-7Z" fill="#f8dd77"/><path d="M11.500 7.500 15 11v9M15 11l6 4.500" stroke="#3b2f2a" stroke-width="1.800" fill="none"/><g fill="#3b2f2a"><circle cx="15" cy="11" r="2"/><circle cx="21" cy="15.500" r="2"/><circle cx="15" cy="20.500" r="2"/></g></svg><span class="w-[51px] h-0.5 bg-[#bab4b0]"></span></button>
    <button class="w-[61px] grid grid-rows-[1fr_2px] place-items-center" aria-label="Microsoft Edge"><svg class="size-[30px]" viewBox="0 0 30 30"><defs><linearGradient id="e1" x1="0" y1=".5" x2="1" y2=".3"><stop offset="0" stop-color="#2fb5ee"/><stop offset=".5" stop-color="#32c6c0"/><stop offset="1" stop-color="#5fdc55"/></linearGradient><linearGradient id="e2" x1="0" y1="0" x2="0" y2="1"><stop offset="0" stop-color="#1d9be0"/><stop offset="1" stop-color="#0f57b0"/></linearGradient></defs><path d="M.3 14C.8 6 7 0 15 0c9 0 15 6.500 15 13 0 4.500-3.500 7.200-7.500 7.200-3.500 0-5-1.200-4.700-2.200.5-1 1.200-1.800 1.200-3.500C19 10.500 14.500 7.500 9.500 7.500 5 7.500 1.500 10 .3 14Z" fill="url(#e1)"/><path d="M.2 14.500C1 10 4.500 7.500 9.500 7.500c3.500 0 6.500 1.500 8.200 3.700-2-.7-6.700.8-6.700 6.300 0 6 5 10 10 10-1.500 1.500-4 2.500-6.500 2.500C6 30-.5 23 .2 14.500Z" fill="url(#e2)"/><path d="M11 17.500c0 6.500 8 10.500 16 4.500 1-.7 1.700.2 1 1-2 3-5.500 5.300-9 6C13 28.500 9 23 11 17.500Z" fill="#1765bd"/></svg><span class="w-[51px] h-0.5 bg-[#bab4b0]"></span></button>
  </nav>

  <div class="ml-auto flex items-center">
    <button class="w-[30px] grid place-items-center" aria-label="Show hidden icons"><svg class="size-5" viewBox="0 0 20 20" fill="none" stroke="#fff" stroke-width="1.400"><path d="m2 14 8-8 8 8"/></svg></button>
    <button class="w-[30px] grid place-items-center" aria-label="Microphone"><svg class="size-5" viewBox="0 0 20 20"><rect x="5" y="0" width="9" height="15" rx="1.500" fill="#fff"/><path d="M3 10v4.500c0 1.500.8 2 2 2h9c1.200 0 2-.5 2-2V10M9.500 16.500v3M6 19.400h7" fill="none" stroke="#fff" stroke-width="1.300"/></svg></button>
    <button class="w-[30px] grid place-items-center" aria-label="Volume"><svg class="size-5" viewBox="0 0 20 20" fill="none" stroke="#fff" stroke-width="1.200"><path d="M.8 7v6h3L8 16.500v-13L3.800 7ZM10.500 7.500c1.300 1.300 1.300 3.700 0 5M13 5.500c2.500 2.500 2.500 6.500 0 9"/><path d="M16 3.500c3.500 3.500 3.500 9.500 0 13" stroke="#8b8582"/></svg></button>
    <button class="w-[46px] text-sm text-center">ENG</button>
    <time class="w-[90px] pl-1 pr-3 text-sm leading-[23px] text-center whitespace-nowrap">8:53 PM<br>03-Feb-23</time>
    <button class="relative w-[38px] grid place-items-center" aria-label="22 notifications"><svg class="size-5" viewBox="0 0 20 20"><path d="M0 0h20v16.500H8L4.500 20v-3.500H0Z" fill="#fff"/><path d="M4 4.500h12M4 8h12M4 11.500h8" stroke="#3a3533" stroke-width="1.200"/></svg><span class="absolute left-4 top-1 size-6 rounded-full border border-[#a39e9b] bg-[#3a3533]/80 text-sm leading-[22px] font-semibold text-center">22</span></button>
    <span class="ml-4 mr-1 w-px h-[49px] bg-[#6b6664]"></span>
  </div>
</footer>
</body>
</html>
